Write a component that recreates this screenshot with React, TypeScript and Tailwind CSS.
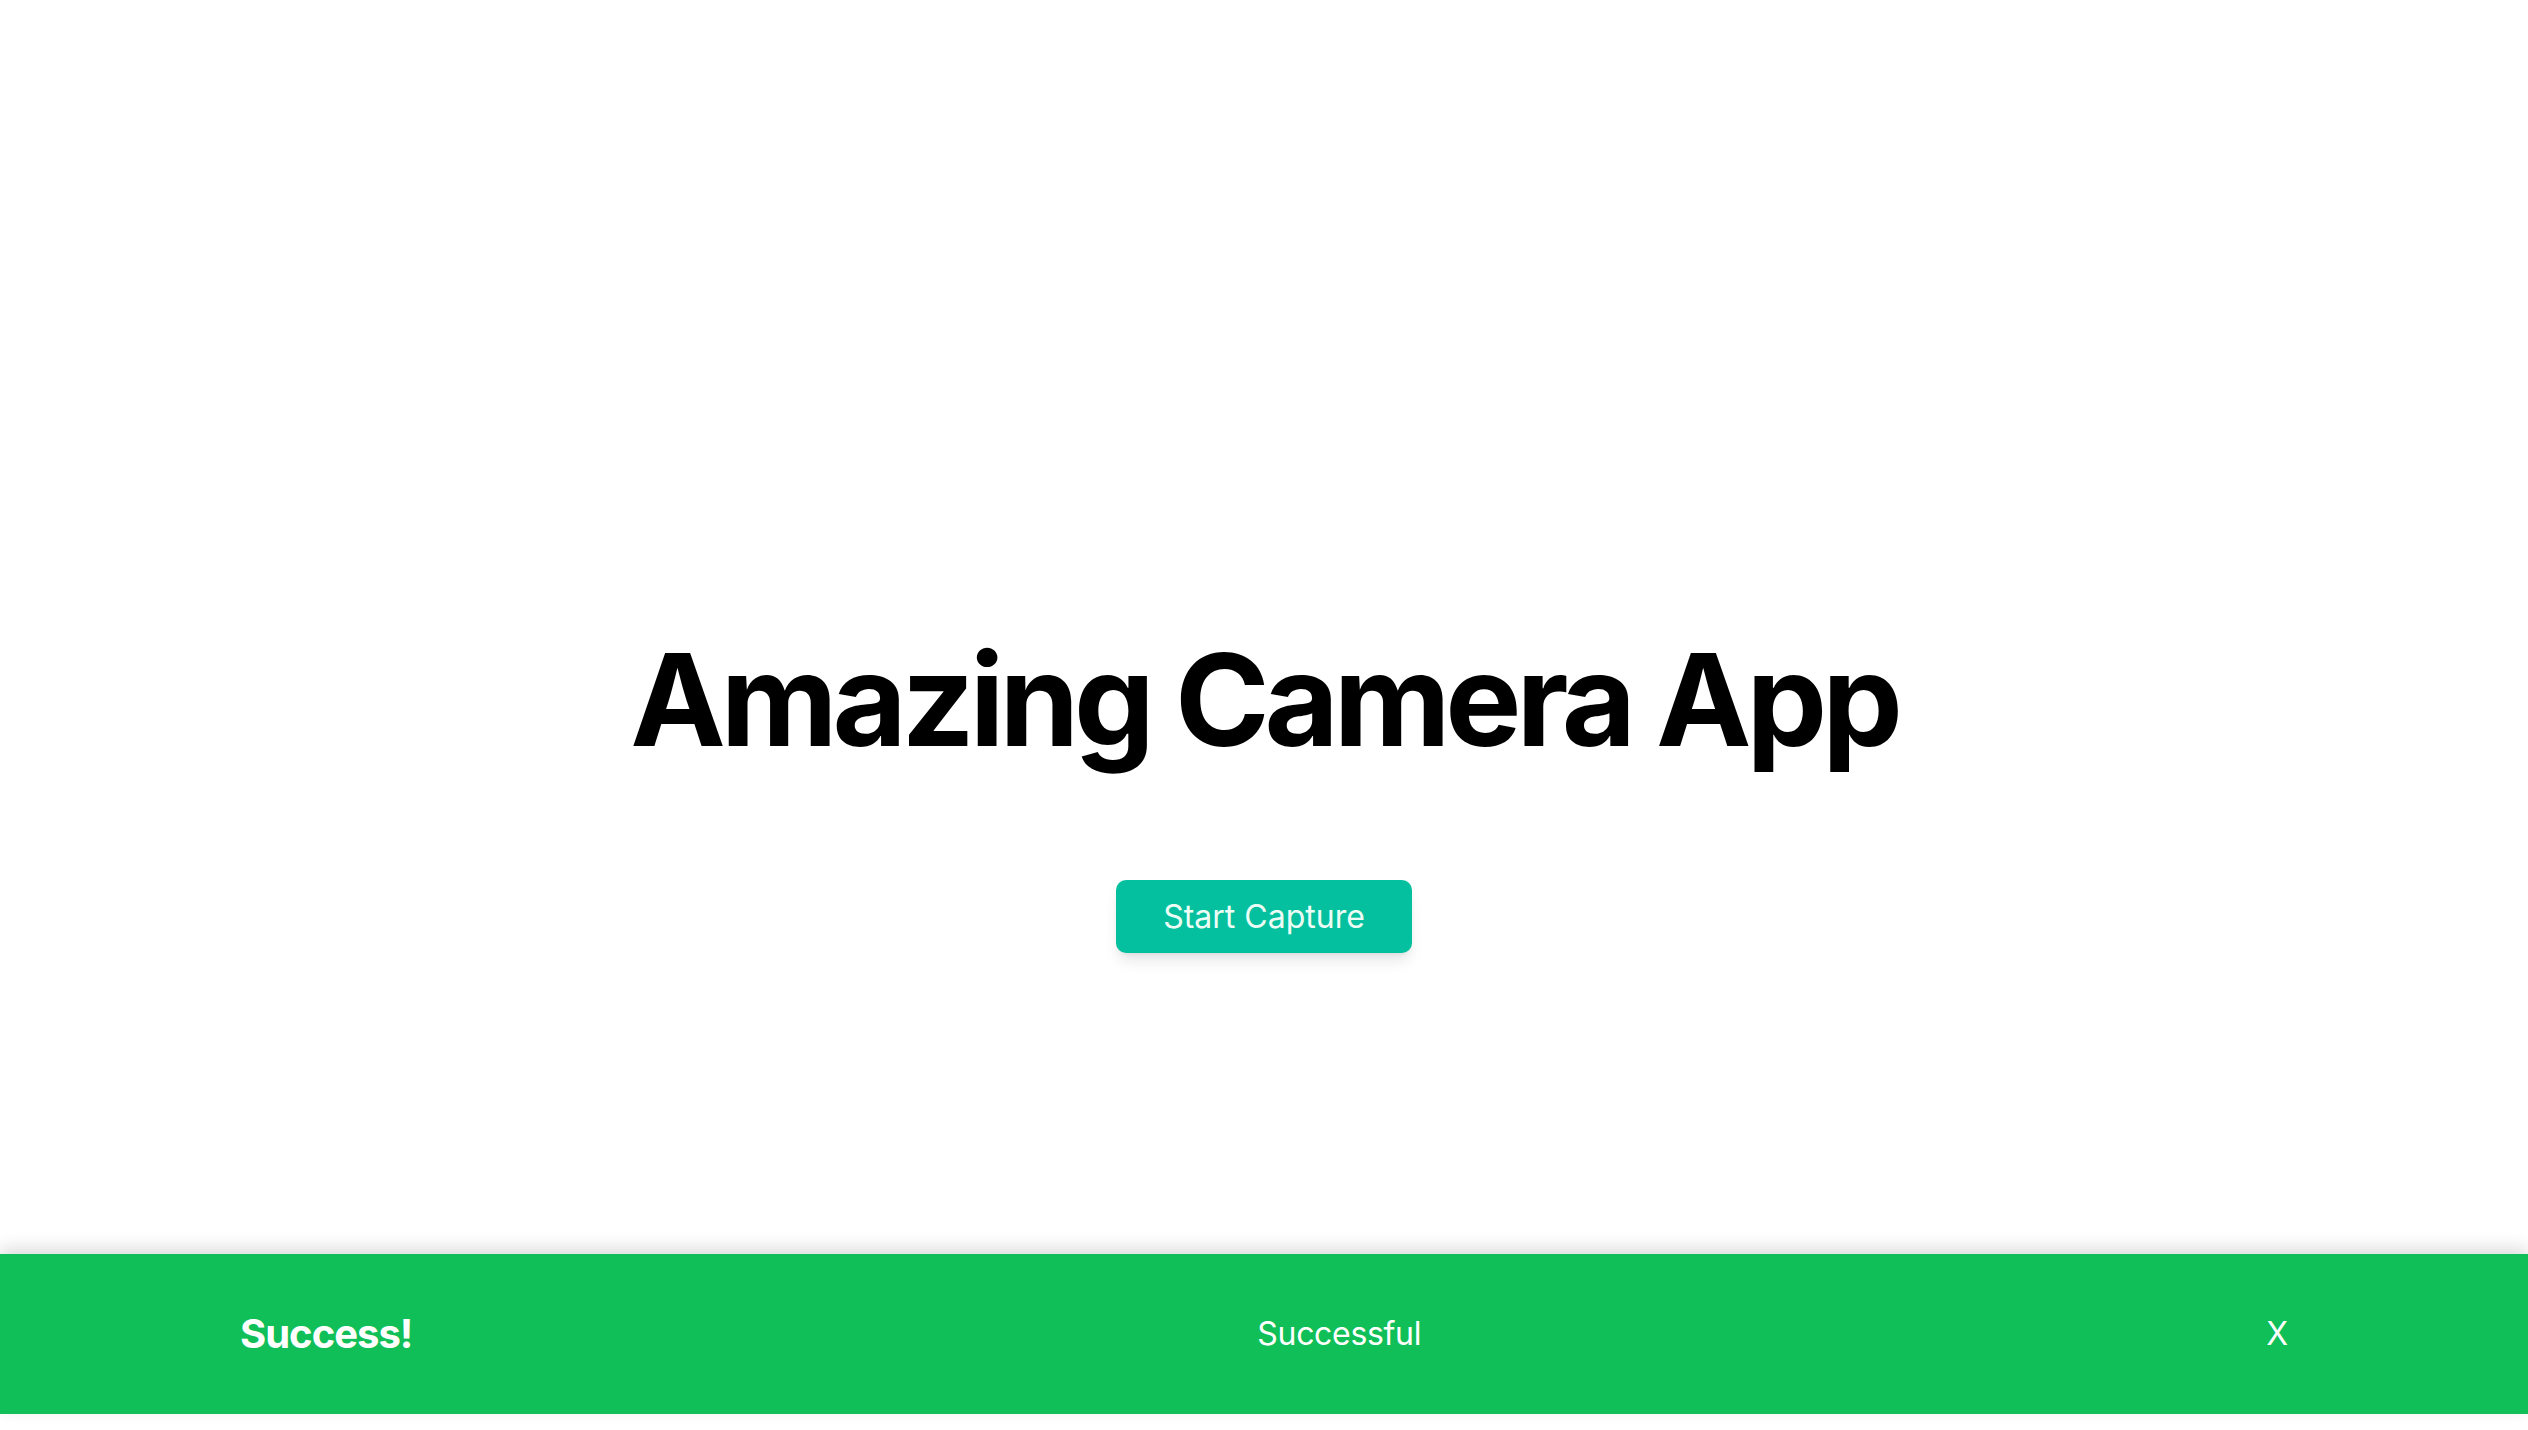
import React from "react";

const font = { fontFamily: "Inter, 'Noto Sans', sans-serif" };

const Toast = () => {
  return (
    <div className="flex flex-row items-center justify-between h-[160px] px-60 bg-[#10bf57] text-white shadow-[0_-6px_16px_rgba(0,0,0,0.14)]">
      <p className="text-[40px] font-bold leading-none tracking-[-0.025em]">
        Success!
      </p>
      <p className="text-[32px] leading-none tracking-[-0.01em]">Successful</p>
      <button className="text-[32px] leading-none">X</button>
    </div>
  );
};

export default function App() {
  return (
    <div style={font} className="flex flex-col w-full min-h-screen bg-white">
      {/* Main */}
      <div className="flex flex-col items-center h-[1254px] pt-[636px]">
        <h1 className="text-9xl font-bold leading-none tracking-[-0.04em] text-black">
          Amazing Camera App
        </h1>
        <button className="mt-[116px] px-[47px] h-[73px] rounded-[10px] bg-[#05c09f] text-[#ecfdf5] text-[32px] leading-none shadow-lg">
          Start Capture
        </button>
      </div>
      {/* Toast */}
      <Toast />
    </div>
  );
}
